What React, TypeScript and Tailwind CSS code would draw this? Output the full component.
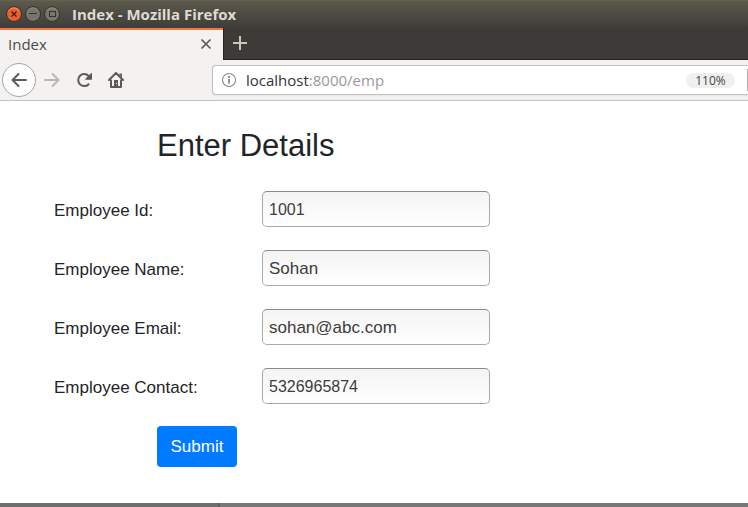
import { useState } from "react";

type Field = {
  id: string;
  label: string;
  value: string;
  type: string;
  size: string;
};

const fields: Field[] = [
  { id: "emp-id", label: "Employee Id:", value: "1001", type: "text", size: "text-base" },
  { id: "emp-name", label: "Employee Name:", value: "Sohan", type: "text", size: "text-[17px]" },
  { id: "emp-email", label: "Employee Email:", value: "sohan@abc.com", type: "email", size: "text-[17px]" },
  { id: "emp-contact", label: "Employee Contact:", value: "5326965874", type: "tel", size: "text-base" },
];

function TitleBar() {
  return (
    <header className="flex h-7 items-center bg-linear-to-b from-[#5d5a4e] to-[#3e3d38] pl-[6px] shadow-[inset_0_1px_0_#66624f]">
      <div className="flex gap-[3px]">
        <button type="button" aria-label="Close window" className="size-4">
          <svg viewBox="0 0 16 16" className="size-4">
            <circle cx="8" cy="8" r="7.5" fill="#e9602f" stroke="#33322d" />
            <path d="M2.5 5.2a6.3 6.3 0 0 1 11 0" fill="none" stroke="#f48b62" />
            <path d="M5.5 5.5l5 5m0-5l-5 5" stroke="#3c1e10" strokeWidth="1.2" />
          </svg>
        </button>
        <button type="button" aria-label="Minimize window" className="size-4">
          <svg viewBox="0 0 16 16" className="size-4">
            <circle cx="8" cy="8" r="7.5" fill="#77756c" stroke="#33322d" />
            <path d="M2.5 5.2a6.3 6.3 0 0 1 11 0" fill="none" stroke="#8c8a80" />
            <path d="M4 7.5h8" stroke="#34332e" />
          </svg>
        </button>
        <button type="button" aria-label="Maximize window" className="size-4">
          <svg viewBox="0 0 16 16" className="size-4">
            <circle cx="8" cy="8" r="7.5" fill="#77756c" stroke="#33322d" />
            <path d="M2.5 5.2a6.3 6.3 0 0 1 11 0" fill="none" stroke="#8c8a80" />
            <rect x="5.5" y="5.5" width="6" height="5" fill="none" stroke="#34332e" />
          </svg>
        </button>
      </div>
      <span className="ml-[12px] text-[15px] leading-5 font-bold text-[#dfdbd2]">Index - Mozilla Firefox</span>
    </header>
  );
}

function TabStrip() {
  return (
    <div className="flex h-8 bg-[#3c3b37]">
      <div className="flex w-[223px] shrink-0 items-center justify-between border-t-2 border-[#f07746] bg-[#f3f2f1] pr-[11px] pb-[2px] pl-2">
        <span className="text-[15px] leading-5 text-[#4c4c4c]">Index</span>
        <button type="button" aria-label="Close tab" className="size-3">
          <svg viewBox="0 0 12 12" className="size-3" fill="none" stroke="#5b5a58" strokeWidth="1.7">
            <path d="M1.5 1.5l9 9m0-9l-9 9" />
          </svg>
        </button>
      </div>
      <div className="flex flex-1 items-center border-b border-l border-[#252420] pb-px pl-[9px]">
        <button type="button" aria-label="New tab" className="size-4">
          <svg viewBox="0 0 16 16" className="size-4" fill="none" stroke="#c9c6be" strokeWidth="2">
            <path d="M7 1v14M0 8h14" />
          </svg>
        </button>
      </div>
    </div>
  );
}

function Toolbar() {
  const [path, setPath] = useState(":8000/emp");
  return (
    <nav className="flex h-[41px] items-center border-b border-[#c4c1be] bg-[#f3f2f1] pl-[2px]">
      <button
        type="button"
        aria-label="Back"
        className="flex size-[34px] shrink-0 items-center justify-center rounded-full border border-[#a9a6a3] bg-[#fdfdfd]"
      >
        <svg viewBox="0 0 16 16" className="size-4" fill="none" stroke="#5b5a58" strokeWidth="2" strokeLinecap="round" strokeLinejoin="round">
          <path d="M15 8H1.5M7.5 2l-6 6 6 6" />
        </svg>
      </button>
      <div className="ml-2 flex shrink-0 gap-4">
        <button type="button" aria-label="Forward" disabled className="size-4">
          <svg viewBox="0 0 16 16" className="size-4" fill="none" stroke="#b9b8b6" strokeWidth="2" strokeLinecap="round" strokeLinejoin="round">
            <path d="M1 8h13.5M8.5 2l6 6-6 6" />
          </svg>
        </button>
        <button type="button" aria-label="Reload" className="size-4">
          <svg viewBox="0 0 16 16" className="size-4" fill="none" stroke="#5b5a58" strokeWidth="2" strokeLinecap="round">
            <path d="M12.6 12.2A6 6 0 1 1 12.6 4" />
            <path d="M15 1.2a.6.6 0 0 1 1 .4V7a.8.8 0 0 1-.8.8H9.8a.6.6 0 0 1-.4-1z" fill="#5b5a58" stroke="none" />
          </svg>
        </button>
        <button type="button" aria-label="Home" className="size-4">
          <svg viewBox="0 0 16 16" className="size-4" fill="none" stroke="#5b5a58" strokeWidth="2" strokeLinecap="round" strokeLinejoin="round">
            <path d="M1 8l7-7 7 7M3 8.5V15h10V8.5" />
            <path d="M12 2.2h1.2V5" strokeWidth="1.6" />
            <path d="M6 8h4v7H6z" fill="#5b5a58" stroke="none" />
            <path d="M8.5 11v1" stroke="#f3f2f1" strokeWidth="1" strokeLinecap="butt" />
          </svg>
        </button>
      </div>
      <div className="ml-[88px] flex h-[30px] min-w-0 flex-1 items-center rounded-l-[4px] border border-r-0 border-[#c2bfbc] bg-white pl-2 shadow-xs">
        <svg viewBox="0 0 16 16" className="size-4 shrink-0" fill="none" stroke="#8a8988">
          <circle cx="8" cy="8" r="6.5" strokeWidth="1.1" />
          <path d="M8 7v4.5M8 4v2" strokeWidth="1.8" />
        </svg>
        <label htmlFor="address" className="ml-[9px] text-[15px] leading-5 text-[#333]">
          localhost
        </label>
        <input
          id="address"
          value={path}
          onChange={(e) => setPath(e.target.value)}
          className="min-w-0 flex-1 bg-transparent text-[15px] leading-5 text-[#999] outline-none"
        />
        <button type="button" className="mr-3 h-[15px] w-[49px] shrink-0 rounded-full bg-[#f0f0ef] text-[12px] leading-[15px] text-[#444]">
          110%
        </button>
        <div className="h-[22px] w-px bg-[#b0aeac]" />
      </div>
    </nav>
  );
}

function EmployeeForm() {
  return (
    <main className="flex-1 bg-white pb-9 pl-[54px] font-['Liberation_Sans',Arial,sans-serif] text-[#212529]">
      <h1 className="pt-[26px] pl-[103px] text-[31px] leading-[38px]">Enter Details</h1>
      <form onSubmit={(e) => e.preventDefault()}>
        <div className="mt-[26px] flex flex-col gap-[23px]">
          {fields.map((field) => (
            <div key={field.id} className="flex h-9 items-center">
              <label htmlFor={field.id} className="w-52 shrink-0 pt-1 text-[17px] leading-6">
                {field.label}
              </label>
              <input
                id={field.id}
                type={field.type}
                defaultValue={field.value}
                className={`h-9 w-[228px] rounded-[5px] border border-[#aaa] border-t-[#8c8c8c] bg-linear-to-b from-[#f4f4f4] to-white px-[6px] pt-[2px] text-[#3c3c3c] outline-none ${field.size}`}
              />
            </div>
          ))}
        </div>
        <button type="submit" className="mt-[22px] ml-[103px] h-[41px] w-20 rounded-[4px] bg-[#007bff] text-[17px] leading-6 text-white">
          Submit
        </button>
      </form>
    </main>
  );
}

export default function App() {
  return (
    <div className="flex min-h-screen flex-col font-['Open_Sans','Noto_Sans',sans-serif]">
      <TitleBar />
      <TabStrip />
      <Toolbar />
      <EmployeeForm />
      <footer className="flex h-1 bg-[#777]">
        <div className="w-[220px] border-r-2 border-[#625f5b] bg-[#6f6e6c]" />
      </footer>
    </div>
  );
}
